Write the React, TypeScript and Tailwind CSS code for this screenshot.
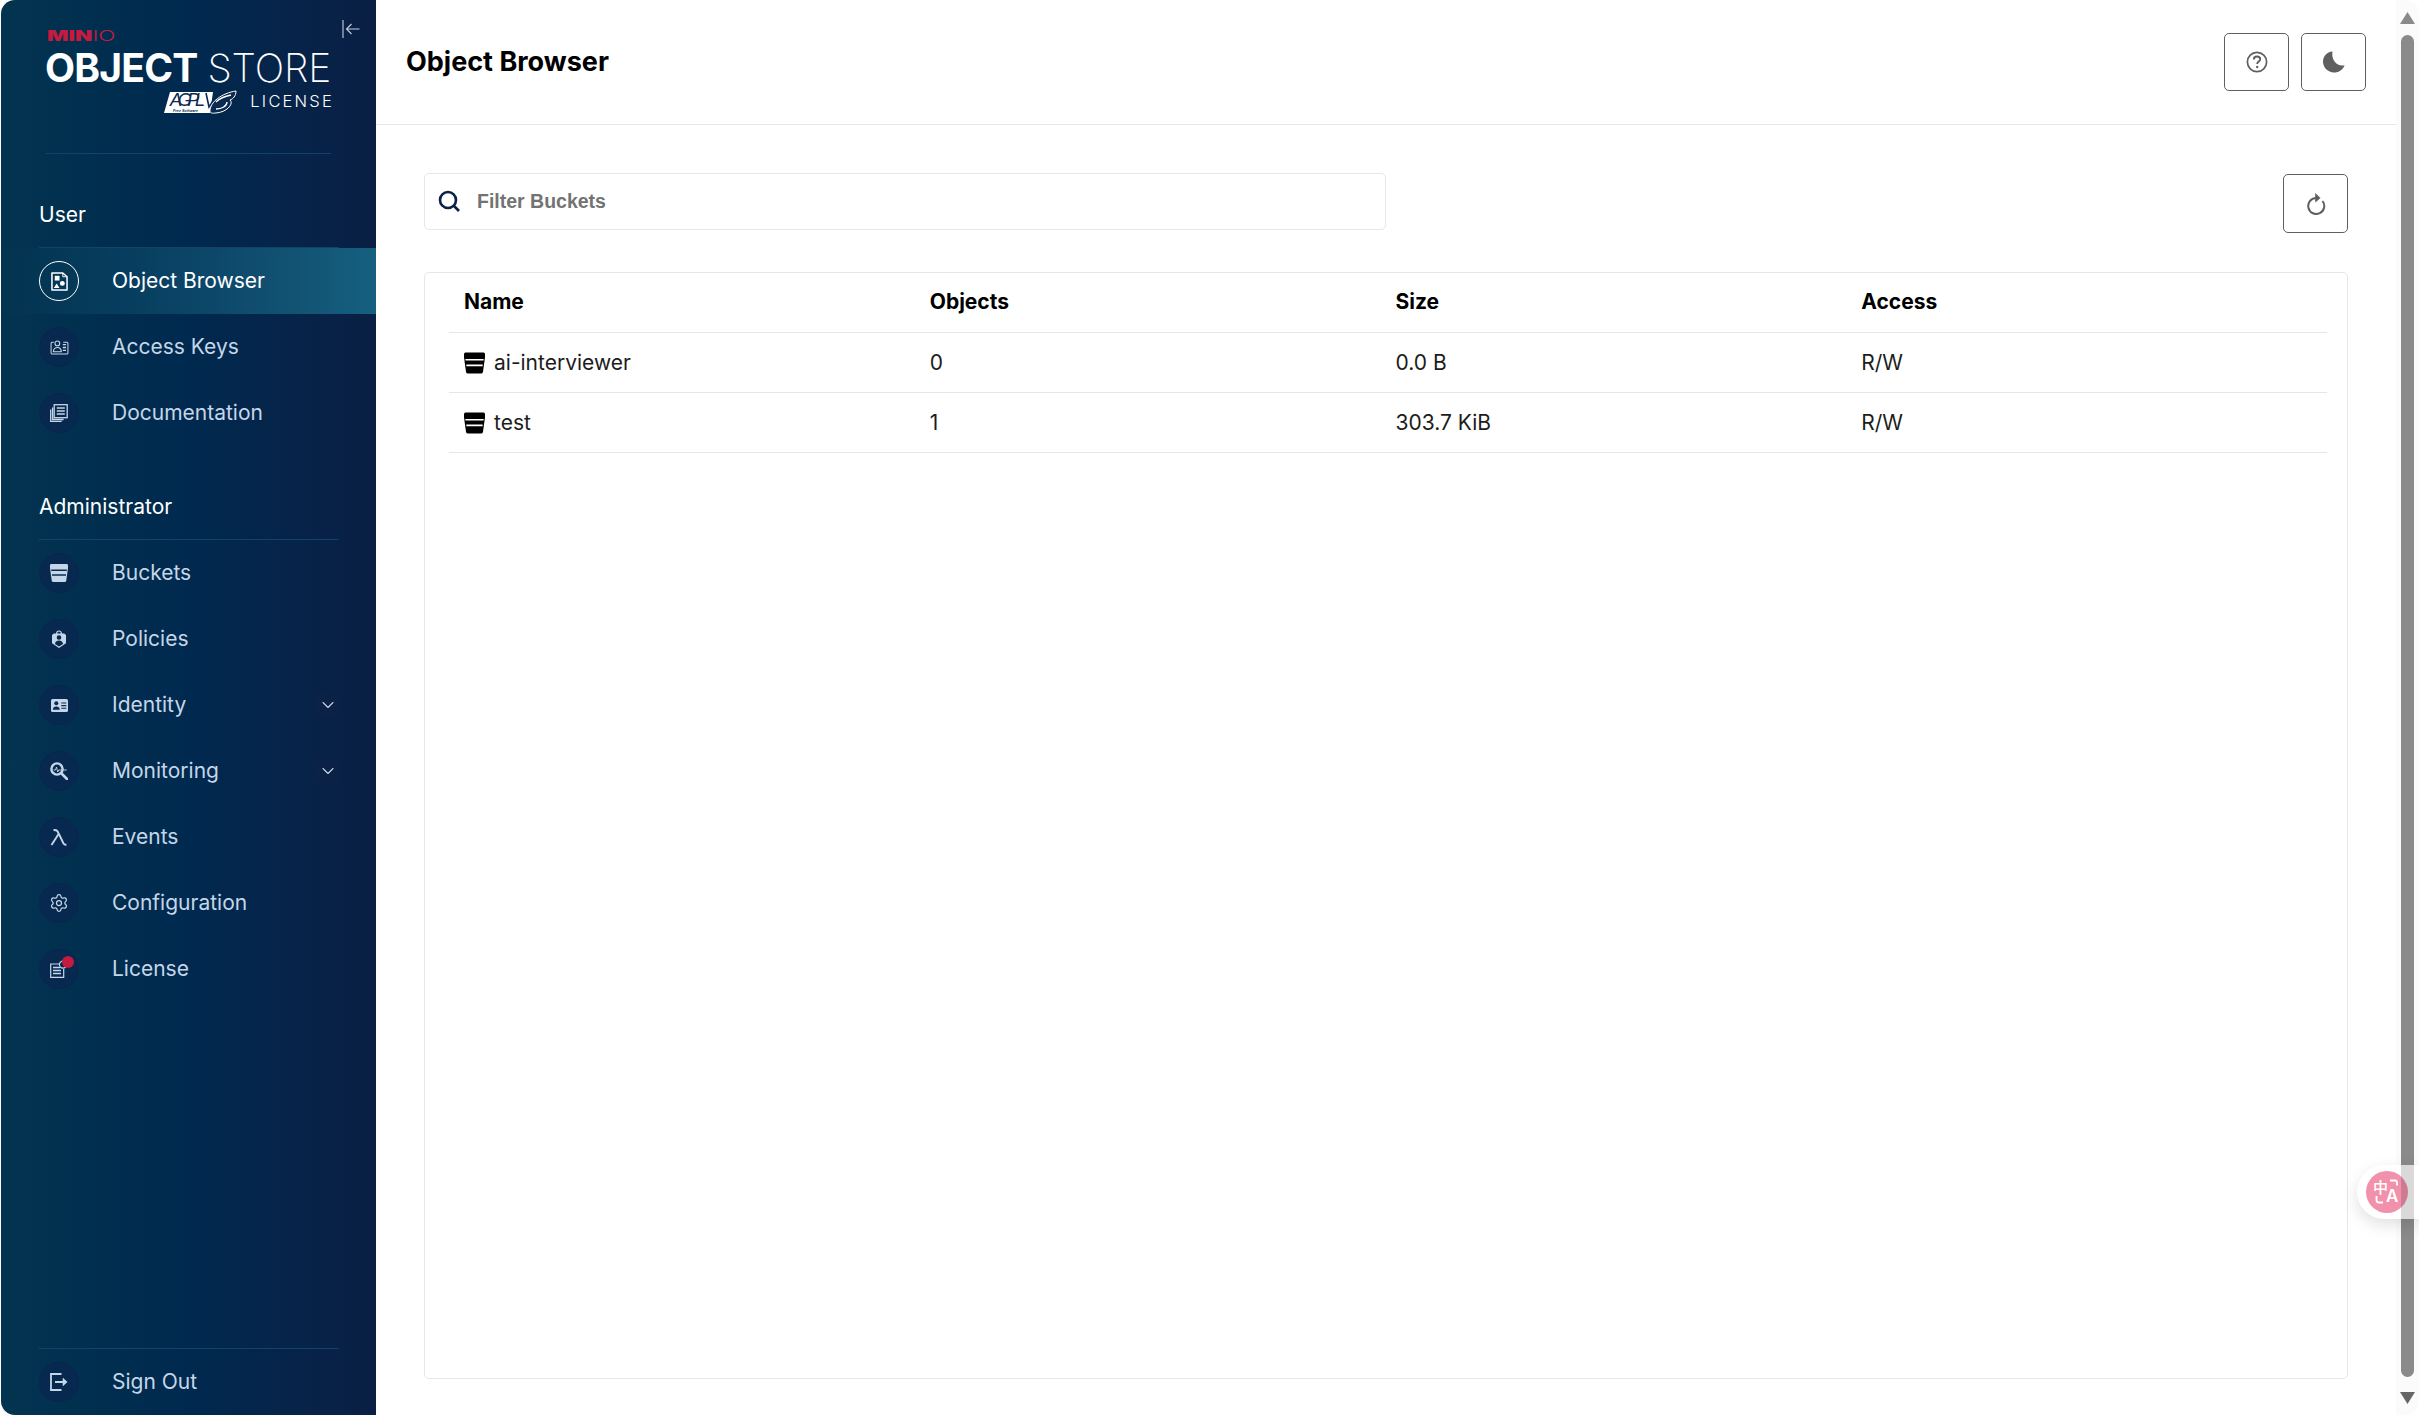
import { ChevronDown, Settings } from 'lucide-react';
import type { ReactNode } from 'react';

const inter = "font-['Inter',sans-serif]";

const ObjectBrowserIcon = () => (
  <svg viewBox="0 0 18 20" className="w-[17px] h-[19px]" fill="none">
    <path d="M1 1h11.5L17 5v14H1z" stroke="currentColor" strokeWidth="1.6" strokeLinejoin="round" />
    <path d="M12.5 1v4H17" stroke="currentColor" strokeWidth="1" />
    <rect x="4" y="4" width="5" height="5" fill="currentColor" />
    <circle cx="12" cy="12" r="2.6" fill="currentColor" />
    <path d="M6 12l3 5H3z" fill="currentColor" />
  </svg>
);

const AccessKeysIcon = () => (
  <svg viewBox="0 0 20 16" className="w-[19px] h-[15px]" fill="none" stroke="currentColor">
    <path d="M4 2.5H1.8L1 3.3v10.9l.8.8h16.4l.8-.8V3.3l-.8-.8H14" strokeWidth="1.1" />
    <circle cx="7.7" cy="3.6" r="2.5" strokeWidth="1.2" />
    <path d="M3.5 12.5c0-3 1.8-4.5 4.2-4.5s4.2 1.5 4.2 4.5z" strokeWidth="1.2" />
    <path d="M13.5 5h3.5M13.5 8h3.5M13.5 11h3.5" strokeWidth="1.4" />
  </svg>
);

const DocumentationIcon = () => (
  <svg viewBox="0 0 18 18" className="w-[18px] h-[18px]" fill="none" stroke="currentColor">
    <rect x="4.2" y="0.7" width="13" height="13" strokeWidth="1.3" />
    <path d="M6.8 4h8M6.8 7h8M6.8 10h8" strokeWidth="1.3" />
    <path d="M2.6 3.5v12h11" strokeWidth="1.3" />
    <path d="M.7 5.5v11.8h11" strokeWidth="1.3" />
  </svg>
);

const BucketIcon = ({ className, lines }: { className: string; lines: string }) => (
  <svg viewBox="0 0 18 18" className={className}>
    <path d="M0 1.3Q0 0 1.3 0h15.4Q18 0 18 1.3V4l-1.7 12.4Q16 18 14.6 18H3.4Q2 18 1.7 16.4L0 4z" fill="currentColor" />
    <path d="M1.2 6.2h15.6M2 11h14" stroke={lines} strokeWidth="1.4" />
  </svg>
);

const PoliciesIcon = () => (
  <svg viewBox="0 0 14 18" className="w-[14px] h-[18px]" fill="currentColor">
    <path fillRule="evenodd" d="M4 3.4C4 1.5 5.3.4 7 .4s3 1.1 3 3h2.2L14 5v8.2L7 18 0 13.2V5l1.8-1.6zm1.3 0h3.4C8.7 2.3 8 1.6 7 1.6s-1.7.7-1.7 1.8zM7 5.2a2.3 2.3 0 100 4.6 2.3 2.3 0 000-4.6zM3 14l4 2.5 4-2.5c0-2-1.8-3.4-4-3.4S3 12 3 14z" />
  </svg>
);

const IdentityIcon = () => (
  <svg viewBox="0 0 17 13" className="w-[17px] h-[13px]">
    <rect width="17" height="13" rx="1.6" fill="currentColor" />
    <circle cx="5.3" cy="4.2" r="2" fill="#0a2a50" />
    <path d="M1.8 10.8c0-2.3 1.6-3.4 3.5-3.4s3.5 1.1 3.5 3.4z" fill="#0a2a50" />
    <path d="M10.3 4h5M10.3 6.6h5M10.3 9.2h5" stroke="#0a2a50" strokeWidth="1.1" />
  </svg>
);

const MonitoringIcon = () => (
  <svg viewBox="0 0 18 18" className="w-[18px] h-[18px]" fill="none" stroke="currentColor">
    <circle cx="7" cy="7" r="5.6" strokeWidth="2.4" />
    <path d="M11.5 11.5L17 17" strokeWidth="2.6" strokeLinecap="round" />
    <path d="M3.5 8h2l1-3 1.2 5 1-2h8" strokeWidth="0.9" />
  </svg>
);

const EventsIcon = () => (
  <svg viewBox="0 0 18 17" className="w-[18px] h-[17px]" fill="none" stroke="currentColor" strokeWidth="1.9">
    <path d="M3.5 1.2c2.6-.6 3.8.2 4.9 2.7l5 10.3c.7 1.3 1.5 1.7 3 1.5" />
    <path d="M8.6 5L1.5 16" />
  </svg>
);

const LicenseIcon = () => (
  <div className="relative w-[18px] h-[18px]">
    <svg viewBox="0 0 18 18" className="w-[18px] h-[18px]" fill="none" stroke="currentColor">
      <path d="M10 4H.7v13.3h13V9" strokeWidth="1.2" />
      <path d="M3 7.5h7M3 10.5h8M3 13.5h8" strokeWidth="1.4" />
      <circle cx="13" cy="4.6" r="3.6" strokeWidth="1.2" />
    </svg>
    <div className="absolute left-[12px] top-[-4px] w-3 h-3 rounded-full bg-[#c51b3f]" />
  </div>
);

const SignOutIcon = () => (
  <svg viewBox="0 0 18 18" className="w-[18px] h-[18px]" fill="none" stroke="currentColor" strokeWidth="1.8">
    <path d="M11.5 1H1v16h10.5" />
    <path d="M5 9h10" />
    <path d="M13 5.2L17.2 9 13 12.8z" fill="currentColor" strokeWidth="0.6" />
  </svg>
);

function NavItem({ icon, label, active, expand }: { icon: ReactNode; label: string; active?: boolean; expand?: boolean }) {
  return (
    <div className={`h-[66px] shrink-0 flex items-center pl-[38px] pr-[37px] ${active ? 'bg-gradient-to-r from-transparent to-[#15607f] text-white' : 'text-[#c5d6e8]'}`}>
      <div className={`w-10 h-10 shrink-0 rounded-full flex items-center justify-center ${active ? 'border-[1.5px] border-white' : 'bg-[#0a2550]/70 border border-[#0b2550]'}`}>
        {icon}
      </div>
      <span className="ml-[33px] flex-1 text-[21px]">{label}</span>
      {expand && (
        <div className="w-[23px] h-[23px] rounded-[3px] bg-[#0b2145] flex items-center justify-center">
          <ChevronDown className="w-5 h-5" strokeWidth={1.3} />
        </div>
      )}
    </div>
  );
}

function Logo() {
  return (
    <div className="pl-[44px] pt-[26px] flex flex-col text-white">
      <div className="h-[19px] flex items-center text-[#c51b3f] text-[15px] leading-none origin-left scale-x-[1.5] ml-[2px]">
        <span className="font-black">MIN</span>
        <span className="font-light">IO</span>
      </div>
      <div className="mt-1 h-[36px] flex items-center text-[39px] leading-none whitespace-nowrap">
        <span className="font-bold tracking-[-0.8px]">OBJECT</span>
        <span className="ml-[10px] font-extralight tracking-[-0.1px]">STORE</span>
      </div>
      <div className="mt-1 w-[287px] h-[25px] flex items-center justify-end">
        <svg viewBox="0 0 73 24" className="w-[73px] h-6">
          <path d="M6 2h43l-3 21H0z" fill="#fff" />
          <text x="6" y="16" fontFamily="Liberation Sans" fontStyle="italic" fontSize="18" fill="#0b2a52" textLength="35">AGPL</text>
          <text x="9" y="21.5" fontFamily="Liberation Sans" fontStyle="italic" fontWeight="700" fontSize="3.8" fill="#0b2a52">Free Software</text>
          <path d="M42 3l3 14 6-9" fill="none" stroke="#0b2a52" strokeWidth="1.6" />
          <path d="M46 21C46 12 58 3 72 1c0 5-3 8-6 9 4 3-2 12-14 13-4 .5-6 0-6-2z" fill="#0b2a52" stroke="#fff" strokeWidth="1" />
          <path d="M52 12c4-4 10-6 15-7M52 19c6 0 11-3 11-7" fill="none" stroke="#fff" strokeWidth="1.4" />
        </svg>
        <span className="ml-[13px] text-[16.5px] tracking-[2.2px] font-light leading-none mr-[-2px]">LICENSE</span>
      </div>
    </div>
  );
}

function Sidebar() {
  return (
    <aside className="relative ml-px w-[375px] shrink-0 h-full rounded-l-[14px] bg-gradient-to-r from-[#03344f] via-[#00294f] to-[#0a1f44] flex flex-col overflow-hidden">
      <svg viewBox="0 0 18 18" className="absolute left-[341px] top-[20px] w-[18px] h-[18px] text-[#c5d0dc]" fill="none" stroke="currentColor" strokeWidth="1.1">
        <path d="M1 0v18M17.500 9H4.500M9.500 4l-5 5 5 5" />
      </svg>
      <div className="h-[153px] shrink-0">
        <Logo />
      </div>
      <div className="ml-[45px] w-[285px] h-px bg-[#12436b] shrink-0" />

      <div className="mt-[45px] ml-[38px] h-8 flex items-center text-white text-[21px] shrink-0">User</div>
      <div className="mt-[16px] ml-[38px] w-[300px] h-px bg-[#12436b] shrink-0" />
      <NavItem active icon={<ObjectBrowserIcon />} label="Object Browser" />
      <NavItem icon={<AccessKeysIcon />} label="Access Keys" />
      <NavItem icon={<DocumentationIcon />} label="Documentation" />

      <div className="mt-[45px] ml-[38px] h-8 flex items-center text-white text-[21px] shrink-0">Administrator</div>
      <div className="mt-4 ml-[38px] w-[300px] h-px bg-[#12436b] shrink-0" />
      <NavItem icon={<BucketIcon className="w-[18px] h-[18px]" lines="#0a2a50" />} label="Buckets" />
      <NavItem icon={<PoliciesIcon />} label="Policies" />
      <NavItem expand icon={<IdentityIcon />} label="Identity" />
      <NavItem expand icon={<MonitoringIcon />} label="Monitoring" />
      <NavItem icon={<EventsIcon />} label="Events" />
      <NavItem icon={<Settings className="w-5 h-5" strokeWidth={1.5} />} label="Configuration" />
      <NavItem icon={<LicenseIcon />} label="License" />

      <div className="flex-1" />
      <div className="ml-[38px] w-[300px] h-px bg-[#12436b] shrink-0" />
      <NavItem icon={<SignOutIcon />} label="Sign Out" />
    </aside>
  );
}

function IconButton({ children, className }: { children: ReactNode; className: string }) {
  return (
    <button className={`w-[65px] rounded-[5px] border border-[#5f5f5f] bg-white text-[#5f5f5f] flex items-center justify-center ${className}`}>
      {children}
    </button>
  );
}

const buckets = [
  { name: 'ai-interviewer', objects: '0', size: '0.0 B', access: 'R/W' },
  { name: 'test', objects: '1', size: '303.7 KiB', access: 'R/W' },
];

function Header() {
  return (
    <header className="h-[125px] shrink-0 border-b border-[#e6e6e6] flex items-center justify-between pl-[30px] pr-[30px]">
      <h1 className="text-[27px] font-bold text-black mt-px">Object Browser</h1>
      <div className="flex gap-3">
        <IconButton className="h-[58px]">
          <svg viewBox="0 0 22 22" className="w-[22px] h-[22px]" fill="none" stroke="currentColor" strokeWidth="1.7">
            <circle cx="11" cy="11" r="9.6" />
            <path d="M7.8 8.6c0-2 1.4-3.1 3.2-3.1s3.2 1 3.2 2.800c0 2.300-3 2.300-3 4.700" strokeWidth="1.9" />
            <circle cx="11.2" cy="16" r="1.2" fill="currentColor" stroke="none" />
          </svg>
        </IconButton>
        <IconButton className="h-[58px]">
          <svg viewBox="0 0 22 22" className="w-[22px] h-[22px]" fill="currentColor">
            <path d="M9.500 0.500C3.900 1 0 5.400 0 10.600 0 16.700 4.900 21.500 11 21.500c4.900 0 9-2.900 10.600-7.300-6.600 2-13.800-4.500-12.100-13.700z" />
          </svg>
        </IconButton>
      </div>
    </header>
  );
}

function BucketTable() {
  return (
    <div className="mt-[39px] flex-1 border border-[#e6e6e6] rounded-[5px] pl-[24px] pr-[20px]">
      <div className="grid grid-cols-4 h-[60px] items-center pl-[15px] pb-px border-b border-[#e6e6e6] font-bold text-[21px] text-black">
        <div>Name</div>
        <div>Objects</div>
        <div>Size</div>
        <div>Access</div>
      </div>
      {buckets.map((b) => (
        <div key={b.name} className="grid grid-cols-4 h-[60px] items-center pl-[15px] border-b border-[#e6e6e6] text-[21px] text-[#1c1c1c]">
          <div className="flex items-center">
            <BucketIcon className="w-[21px] h-[22px] text-black" lines="#ffffff" />
            <span className="ml-[9px]">{b.name}</span>
          </div>
          <div>{b.objects}</div>
          <div>{b.size}</div>
          <div>{b.access}</div>
        </div>
      ))}
    </div>
  );
}

function Scrollbar() {
  return (
    <div className="w-[23px] shrink-0 h-full bg-[#fbfbfb] rounded-r-[14px] flex flex-col items-center pt-3 pb-[11px]">
      <svg viewBox="0 0 15 12" className="w-[15px] h-3 text-[#8a8a8a]" fill="currentColor">
        <path d="M7.500 0L15 12H0z" />
      </svg>
      <div className="mt-[11px] mb-[15px] w-[13px] flex-1 rounded-full bg-[#8a8a8a]" />
      <svg viewBox="0 0 15 12" className="w-[15px] h-3 text-[#666666]" fill="currentColor">
        <path d="M0 0h15L7.500 12z" />
      </svg>
    </div>
  );
}

function TranslateWidget() {
  return (
    <div className="absolute right-0 top-[1165px] w-[62px] h-[54px] rounded-l-full bg-white shadow-[0_6px_16px_rgba(0,0,0,0.12)]">
      <div className="absolute left-[9px] top-[6px] w-[42px] h-[42px] rounded-full bg-[#f291ab] text-white font-['Noto_Sans_CJK_SC',sans-serif]">
        <span className="absolute left-[7px] top-[6px] text-[15px] font-medium leading-[20px]">中</span>
        <span className={`absolute left-[20px] top-[15px] text-[17px] font-semibold leading-[20px] ${inter}`}>A</span>
        <svg viewBox="0 0 42 42" className="absolute inset-0" fill="none" stroke="#fff" strokeWidth="1.8">
          <path d="M24 9.500h5q2 0 2 2v3M10.500 25v4q0 2.500 2.500 2.500h4" />
        </svg>
      </div>
      <div className="absolute left-[44px] top-0 w-[13px] h-full bg-black/15" />
    </div>
  );
}

export default function App() {
  return (
    <div className={`relative w-screen h-screen flex overflow-hidden bg-white ${inter}`}>
      <Sidebar />
      <main className="flex-1 min-w-0 h-full flex flex-col">
        <Header />
        <div className="flex-1 flex flex-col pt-[48px] pl-[48px] pr-[48px] pb-[36px]">
          <div className="flex items-start justify-between">
            <div className="w-[962px] h-[57px] border border-[#e6e6e6] rounded-[5px] flex items-center pl-[13px]">
              <svg viewBox="0 0 22 22" className="w-[22px] h-[22px] text-[#0b2145] mb-px" fill="none" stroke="currentColor" strokeWidth="2.6">
                <circle cx="10" cy="10" r="8" />
                <path d="M15.500 15.500L21 21" />
              </svg>
              <span className="ml-[17px] font-['Liberation_Sans',sans-serif] font-bold text-[19.5px] text-[#737373]">Filter Buckets</span>
            </div>
            <IconButton className="h-[59px] mt-px">
              <svg viewBox="0 0 20 22" className="w-[20px] h-[22px]" fill="none" stroke="currentColor" strokeWidth="2">
                <path d="M10 5a8 8 0 1 0 6.500 3" />
                <path d="M9.500 0.500l4.700 4.500-4.700 4z" fill="currentColor" strokeWidth="0.6" />
              </svg>
            </IconButton>
          </div>
          <BucketTable />
        </div>
      </main>
      <Scrollbar />
      <TranslateWidget />
    </div>
  );
}
